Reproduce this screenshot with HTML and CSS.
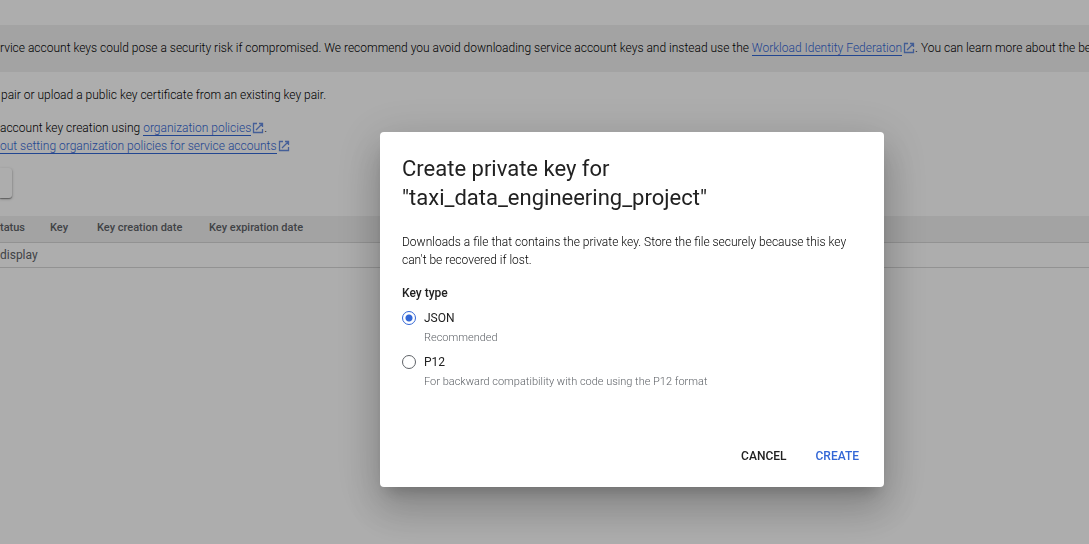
FILE: index.html
```html
<!DOCTYPE html>
<html lang="en">
<head>
<meta charset="utf-8">
<meta name="viewport" content="width=device-width, initial-scale=1">
<title>Service account keys</title>
<link rel="stylesheet" href="styles.css">
</head>
<body>
<svg class="defs" aria-hidden="true">
  <symbol id="external" viewBox="0 0 12 12">
    <path d="M5 1.5H1.5v9h9V7M7 1.5h3.5V5M10.5 1.5L4 8" fill="none" stroke="currentColor" stroke-width="1.3"/>
  </symbol>
</svg>
<main class="page">
  <p class="banner">rvice account keys could pose a security risk if compromised. We recommend you avoid downloading service account keys and instead use the <a class="link" href="#">Workload Identity Federation</a><svg class="external"><use href="#external"/></svg>. You can learn more about the best</p>
  <div class="intro">
    <p class="text text-pair">pair or upload a public key certificate from an existing key pair.</p>
    <p class="text">account key creation using <a class="link" href="#">organization policies</a><svg class="external"><use href="#external"/></svg>.<br><a class="link" href="#">out setting organization policies for service accounts</a><svg class="external"><use href="#external"/></svg></p>
  </div>
  <button class="add-key" type="button" aria-label="Add key"></button>
  <table class="keys">
    <thead>
      <tr><th class="col-status">tatus</th><th class="col-key">Key</th><th class="col-created">Key creation date</th><th>Key expiration date</th></tr>
    </thead>
    <tbody>
      <tr><td colspan="4">display</td></tr>
    </tbody>
  </table>
</main>
<div class="backdrop">
  <form class="dialog" role="dialog" aria-modal="true" aria-labelledby="dialog-title">
    <h1 class="title" id="dialog-title">Create private key for "taxi_data_engineering_project"</h1>
    <p class="description">Downloads a file that contains the private key. Store the file securely because this key can't be recovered if lost.</p>
    <fieldset class="key-type">
      <legend class="legend">Key type</legend>
      <div class="option">
        <input class="radio" type="radio" name="type" id="json" checked>
        <label class="label" for="json">JSON</label>
        <span class="hint">Recommended</span>
      </div>
      <div class="option">
        <input class="radio" type="radio" name="type" id="p12">
        <label class="label" for="p12">P12</label>
        <span class="hint">For backward compatibility with code using the P12 format</span>
      </div>
    </fieldset>
    <div class="actions">
      <button class="action" type="button">CANCEL</button>
      <button class="action action-primary" type="button">CREATE</button>
    </div>
  </form>
</div>
</body>
</html>
```

FILE: styles.css
```css
* {
  box-sizing: border-box;
}

body {
  margin: 0;
  background: #fff;
  color: #000;
  font: 300 12px/18px Roboto, sans-serif;
}

p, h1, fieldset {
  margin: 0;
}

.defs {
  position: absolute;
  width: 0;
  height: 0;
}

.page {
  min-height: 100vh;
  padding-top: 25px;
  overflow: hidden;
}

.banner {
  padding: 14px 0 15px;
  background: #f1f1f1;
  white-space: nowrap;
}

.intro {
  display: grid;
  gap: 15px;
  padding-top: 14px;
  white-space: nowrap;
}

.text-pair {
  padding-left: 1px;
}

.link {
  border-bottom: 1px solid #3367d6;
  color: #3367d6;
  text-decoration: none;
}

.external {
  width: 12px;
  height: 12px;
  margin-left: 1px;
  color: #3367d6;
  opacity: 0.75;
  vertical-align: -2px;
}

.add-key {
  display: block;
  width: 12px;
  height: 30px;
  margin: 13px 0 18px;
  padding: 0;
  border: 0;
  border-radius: 0 3px 3px 0;
  background: #fff;
  box-shadow: 0 1px 3px rgba(0, 0, 0, 0.3), 0 1px 1px rgba(0, 0, 0, 0.3);
}

.keys {
  width: 100%;
  border-collapse: collapse;
  color: #5f6368;
  text-align: left;
}

.keys th {
  height: 26px;
  padding: 0 0 2px;
  border-bottom: 1px solid #d8d8d8;
  background: #f1f1f1;
  font-size: 11px;
  font-weight: 500;
}

.keys td {
  height: 25px;
  padding: 0;
  border-bottom: 1px solid #d8d8d8;
  font-weight: 400;
}

.col-status {
  width: 50px;
}

.col-key {
  width: 47px;
}

.col-created {
  width: 112px;
}

.backdrop {
  position: fixed;
  inset: 0;
  display: grid;
  place-items: center;
  padding: 75px 0 0 175px;
  background: rgba(0, 0, 0, 0.32);
}

.dialog {
  width: 504px;
  max-width: 100%;
  padding: 22px 16px 15px 22px;
  border-radius: 4px;
  background: #fff;
  box-shadow: 0 11px 15px -7px rgba(0, 0, 0, 0.2), 0 24px 38px 3px rgba(0, 0, 0, 0.14), 0 9px 46px 8px rgba(0, 0, 0, 0.12);
}

.title {
  max-width: 340px;
  color: #212121;
  font-size: 22px;
  font-weight: 400;
  line-height: 29px;
}

.description {
  max-width: 450px;
  margin-top: 21px;
}

.key-type {
  margin-top: 15px;
  padding: 0;
  border: 0;
}

.legend {
  padding: 0 0 1px;
  color: #212121;
  font-weight: 500;
}

.option {
  display: grid;
  grid-template-columns: 14px 1fr;
  gap: 1px 8px;
  align-items: center;
  padding-top: 5px;
}

.radio {
  width: 14px;
  height: 14px;
  margin: 0;
  border: 1px solid #5f6368;
  border-radius: 50%;
  appearance: none;
}

.radio:checked {
  border-color: #3367d6;
  background: radial-gradient(circle, #3367d6 3px, transparent 4px);
}

.label {
  color: #212121;
  font-weight: 400;
  line-height: 20px;
}

.hint {
  grid-column: 2;
  color: #5f6368;
  font-size: 11px;
}

.actions {
  display: flex;
  justify-content: flex-end;
  gap: 11px;
  margin-top: 49px;
}

.action {
  height: 32px;
  padding: 0 9px;
  border: 0;
  background: none;
  color: #212121;
  font: 500 12px/18px Roboto, sans-serif;
}

.action-primary {
  color: #3367d6;
}
```
